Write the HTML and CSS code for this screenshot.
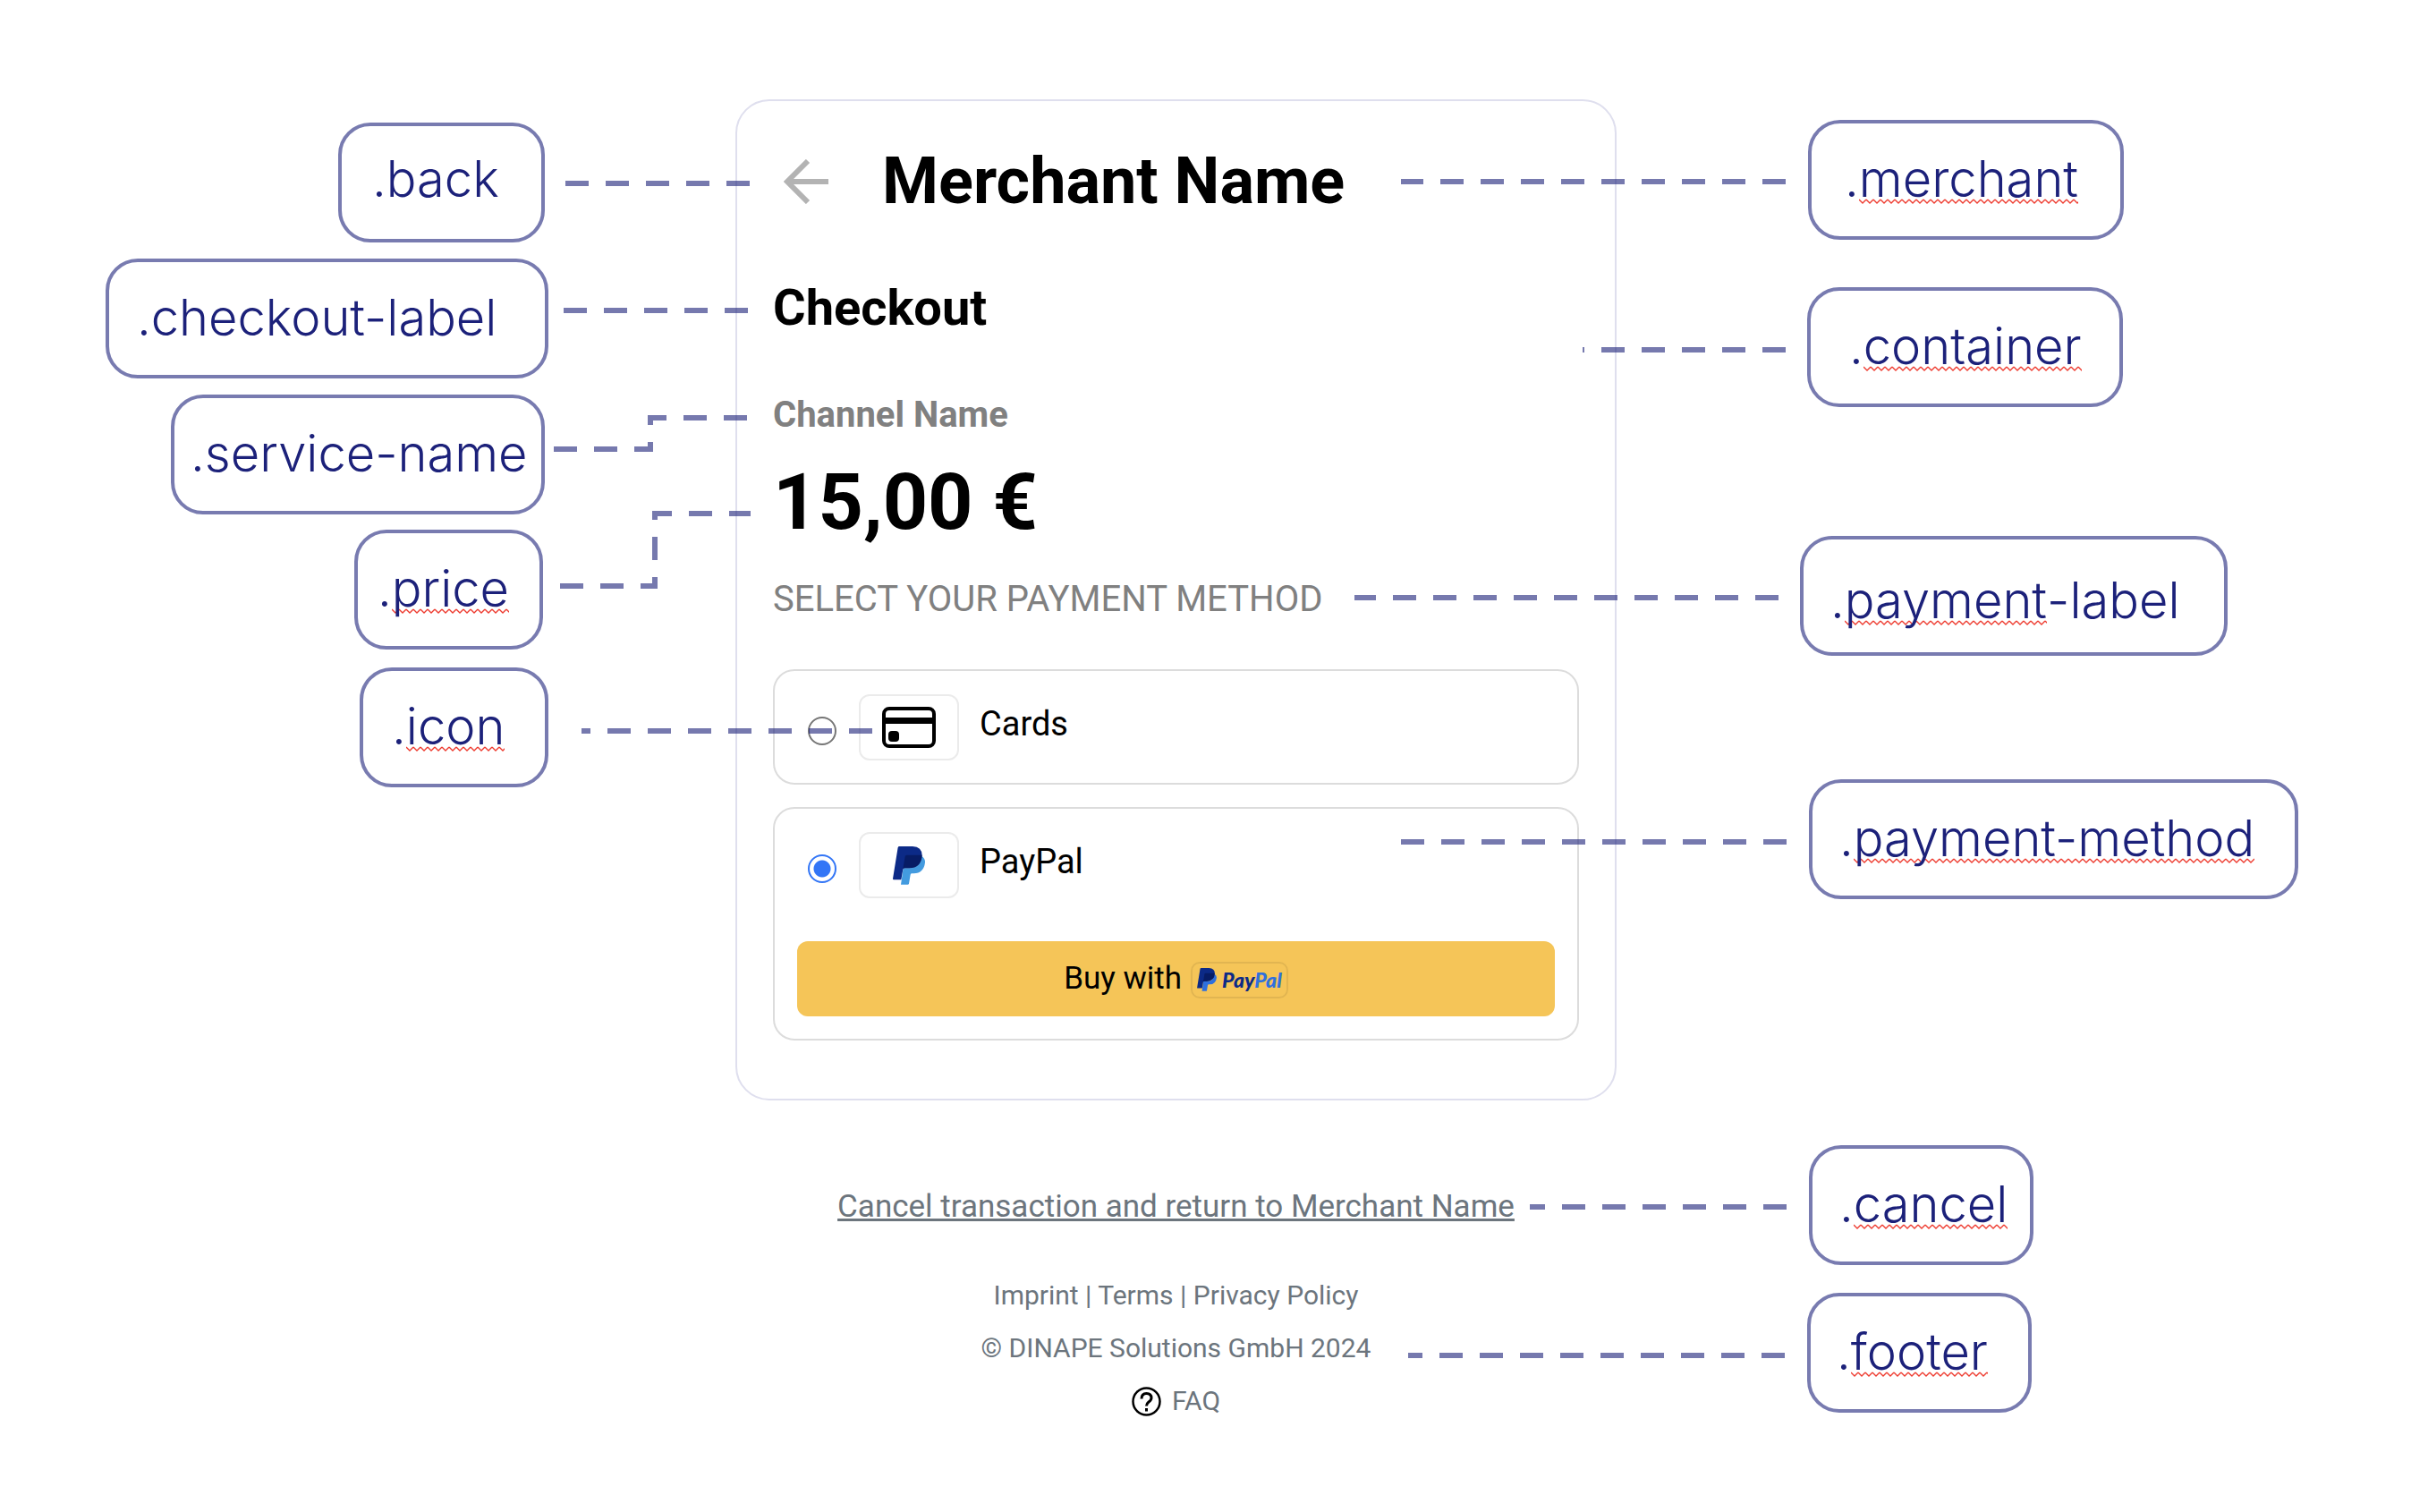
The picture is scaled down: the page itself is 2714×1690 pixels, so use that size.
FILE: index.html
```html
<!DOCTYPE html>
<html lang="en">
<head>
<meta charset="utf-8">
<title>Checkout style guide</title>
<link rel="stylesheet" href="styles.css">
</head>
<body>
<div class="guide">
  <aside class="notes notes-left">
    <div class="callout callout-back">.back</div>
    <div class="callout callout-checkout">.checkout-label</div>
    <div class="callout callout-service">.service-name</div>
    <div class="callout callout-price">.<span class="misspelt">price</span></div>
    <div class="callout callout-icon">.<span class="misspelt">icon</span></div>
    <svg class="connectors" width="365" height="1600" viewBox="615 0 365 1600" aria-hidden="true">
      <path d="M838 205H632"/>
      <path d="M836 347H630"/>
      <path d="M835 467H727V502H619"/>
      <path stroke-dashoffset="2" d="M839 574H732V655H626"/>
      <path d="M975 817H650"/>
    </svg>
  </aside>

  <main class="page">
    <section class="card">
      <header class="card-header">
        <button class="back" type="button" aria-label="Back">
          <svg width="50" height="50" viewBox="0 0 50 50" aria-hidden="true"><path d="M50 25H5M27 2L4 25L27 48"/></svg>
        </button>
        <h1 class="merchant">Merchant Name</h1>
      </header>
      <h2 class="checkout-label">Checkout</h2>
      <p class="service-name">Channel Name</p>
      <p class="price">15,00 €</p>
      <p class="payment-label">SELECT YOUR PAYMENT METHOD</p>

      <div class="payment-list">
        <div class="payment-method">
          <label class="method-row">
            <input class="radio" type="radio" name="method">
            <span class="icon">
              <svg width="60" height="46" viewBox="0 0 60 46" aria-hidden="true">
                <rect x="2" y="2" width="56" height="42" rx="6" fill="none" stroke="#000" stroke-width="4"/>
                <path d="M2 12H58V19H2Z"/>
                <rect x="7" y="27" width="12" height="12" rx="4"/>
              </svg>
            </span>
            <span class="method-name">Cards</span>
          </label>
        </div>
        <div class="payment-method">
          <label class="method-row">
            <input class="radio" type="radio" name="method" checked>
            <span class="icon">
              <svg width="36" height="43" viewBox="414 136 108 129" aria-hidden="true">
                <path fill="#439bdf" d="M510 169Q523 176 522 190Q518 226 484 227H478Q474 227 473 231L468 261Q467 264 464 264H441L449 209H468Q508 208 510 169Z"/>
                <path fill="#0c2a87" d="M436 136H480Q512 138 512 166Q508 208 468 209H454Q449 209 448 213L442 248H417Q414 248 414 245L431 140Q432 136 436 136Z"/>
                <path fill="#071c65" d="M461 165H512Q510 208 468 209H454Q450 209 448 212L455 170Q456 165 461 165Z"/>
              </svg>
            </span>
            <span class="method-name">PayPal</span>
          </label>
          <button class="buy" type="button">
            <span>Buy with</span>
            <span class="brand">
              <svg width="22" height="26" viewBox="414 136 108 129" aria-hidden="true">
                <path fill="#2f70de" d="M510 169Q523 176 522 190Q518 226 484 227H478Q474 227 473 231L468 261Q467 264 464 264H441L449 209H468Q508 208 510 169Z"/>
                <path fill="#0c2a87" d="M436 136H480Q512 138 512 166Q508 208 468 209H454Q449 209 448 213L442 248H417Q414 248 414 245L431 140Q432 136 436 136Z"/>
                <path fill="#071c65" d="M461 165H512Q510 208 468 209H454Q450 209 448 212L455 170Q456 165 461 165Z"/>
              </svg>
              <span class="brand-name">Pay<span class="brand-pal">Pal</span></span>
            </span>
          </button>
        </div>
      </div>
    </section>

    <a class="cancel" href="#">Cancel transaction and return to Merchant Name</a>

    <footer class="footer">
      <p><a href="#">Imprint</a> | <a href="#">Terms</a> | <a href="#">Privacy Policy</a></p>
      <p>© DINAPE Solutions GmbH 2024</p>
      <a class="faq" href="#">
        <svg width="33" height="33" viewBox="0 0 33 33" fill="none" stroke="#000" aria-hidden="true">
          <circle cx="16.500" cy="16.500" r="15" stroke-width="2.500"/>
          <path stroke-width="3" d="M11 13.500Q11 7.500 16.500 7.500Q22 7.500 22 12.500Q22 15 19 17Q16.500 19 16.500 21.500M16.500 24V27.500"/>
        </svg>
        FAQ
      </a>
    </footer>
  </main>

  <aside class="notes notes-right">
    <div class="callout callout-merchant">.<span class="misspelt">merchant</span></div>
    <div class="callout callout-container">.<span class="misspelt">container</span></div>
    <div class="callout callout-payment-label">.<span class="misspelt">payment</span>-label</div>
    <div class="callout callout-payment-method">.<span class="misspelt">payment-method</span></div>
    <div class="callout callout-cancel">.<span class="misspelt">cancel</span></div>
    <div class="callout callout-footer">.<span class="misspelt">footer</span></div>
    <svg class="connectors" width="490" height="1600" viewBox="1510 0 490 1600" aria-hidden="true">
      <path d="M1996 203H1566"/>
      <path d="M1996 391H1769"/>
      <path d="M1988 668H1514"/>
      <path d="M1997 941H1566"/>
      <path d="M1997 1349H1710"/>
      <path d="M1995 1515H1574"/>
    </svg>
  </aside>
</div>
</body>
</html>
```
FILE: styles.css
```css
* { box-sizing: border-box; }

body {
  margin: 0;
  background: #fff;
  color: #000;
  font-family: Roboto, sans-serif;
}

h1, h2, p { margin: 0; }

button {
  border: 0;
  padding: 0;
  background: none;
  color: inherit;
  font: inherit;
  cursor: pointer;
}

.guide {
  display: grid;
  grid-template-columns: 822fr minmax(0, 985px) 907fr;
}

/* Checkout page */

.page { padding: 111px 0 80px; }

.card {
  padding: 50px 40px 65px;
  border: 2px solid #dfdfee;
  border-radius: 38px;
}

.card-header {
  display: flex;
  align-items: center;
  gap: 60px;
  padding-left: 12px;
}

.back { display: flex; }

.back svg {
  fill: none;
  stroke: #b3b3b3;
  stroke-width: 6;
}

.merchant {
  font-size: 72px;
  line-height: 80px;
}

.checkout-label {
  margin-top: 69px;
  font-size: 56px;
  line-height: 64px;
}

.service-name {
  margin-top: 64px;
  color: #808080;
  font-size: 40px;
  font-weight: 700;
  line-height: 48px;
}

.price {
  margin-top: 21px;
  font-size: 88px;
  font-weight: 700;
  line-height: 104px;
}

.payment-label {
  margin-top: 33px;
  color: #808080;
  font-size: 40px;
  line-height: 48px;
}

.payment-list {
  display: grid;
  gap: 25px;
  margin-top: 54px;
}

.payment-method {
  padding: 26px 25px 25px;
  border: 2px solid #dcdcdc;
  border-radius: 24px;
}

.method-row {
  display: flex;
  align-items: center;
  padding-left: 12px;
}

.radio {
  appearance: none;
  width: 32px;
  height: 32px;
  margin: 8px 25px 0 0;
  border: 2px solid #767676;
  border-radius: 50%;
  background: #fff;
}

.radio:checked {
  border-color: #3275f6;
  background: radial-gradient(circle, #3275f6 9px, #fff 10px);
}

.icon {
  display: flex;
  align-items: center;
  justify-content: center;
  width: 112px;
  height: 74px;
  border: 2px solid #ebebeb;
  border-radius: 12px;
}

.method-name {
  margin: 0 0 8px 23px;
  font-size: 38px;
  line-height: 40px;
}

.buy {
  display: flex;
  align-items: center;
  justify-content: center;
  gap: 10px;
  width: 100%;
  height: 84px;
  margin-top: 48px;
  border-radius: 12px;
  background: #f5c558;
  font-size: 35px;
  line-height: 40px;
}

.brand {
  display: flex;
  align-items: center;
  gap: 6px;
  height: 41px;
  margin-top: 2px;
  padding: 0 5px;
  border: 2px solid rgba(0, 0, 0, 0.08);
  border-radius: 10px;
}

.brand-name {
  color: #0c2a87;
  font: italic 900 23px/24px Lato, sans-serif;
}

.brand-pal { color: #2f70de; }

.cancel {
  display: block;
  margin-top: 99px;
  color: #6c757d;
  font-size: 35px;
  line-height: 40px;
  text-align: center;
}

.footer {
  display: flex;
  flex-direction: column;
  align-items: center;
  gap: 23px;
  margin-top: 61px;
  color: #6c757d;
  font-size: 30px;
  line-height: 36px;
}

.footer a {
  color: inherit;
  text-decoration: none;
}

.faq {
  display: flex;
  align-items: center;
  gap: 12px;
}

/* Class-name callouts around the page */

.notes { position: relative; }

.callout {
  position: absolute;
  height: 134px;
  padding-top: 30px;
  border: 4px solid #787bb0;
  border-radius: 36px;
  color: #1c217a;
  font-family: Inter, sans-serif;
  font-size: 56px;
  font-weight: 300;
  line-height: 64px;
  white-space: nowrap;
}

.misspelt {
  display: inline-block;
  background: url("data:image/svg+xml,%3Csvg xmlns='http://www.w3.org/2000/svg' width='8' height='7'%3E%3Cpath d='M0 1L4 5L8 1' fill='none' stroke='%23ee3b2f' stroke-width='1.300'/%3E%3C/svg%3E") repeat-x 0 54px;
}

.callout-back { top: 137px; right: 213px; width: 231px; padding: 27px 0 0 34px; }
.callout-checkout { top: 289px; right: 209px; width: 495px; padding-left: 31px; }
.callout-service { top: 441px; right: 213px; width: 418px; padding-left: 18px; }
.callout-price { top: 592px; right: 215px; width: 211px; padding-left: 22px; }
.callout-icon { top: 746px; right: 209px; width: 211px; padding-left: 32px; }

.callout-merchant { top: 134px; left: 214px; width: 353px; padding-left: 37px; }
.callout-container { top: 321px; left: 213px; width: 353px; padding-left: 43px; }
.callout-payment-label { top: 599px; left: 205px; width: 478px; padding: 36px 0 0 30px; }
.callout-payment-method { top: 871px; left: 215px; width: 547px; padding-left: 30px; }
.callout-cancel { top: 1280px; left: 215px; width: 251px; padding-left: 30px; }
.callout-footer { top: 1445px; left: 213px; width: 251px; padding-left: 29px; }

.connectors {
  position: absolute;
  top: 0;
  z-index: 1;
  fill: none;
  stroke: #1c217a;
  stroke-width: 6;
  stroke-dasharray: 26 19;
  opacity: 0.6;
  pointer-events: none;
}

.notes-left .connectors { right: -158px; }
.notes-right .connectors { left: -297px; }
```
